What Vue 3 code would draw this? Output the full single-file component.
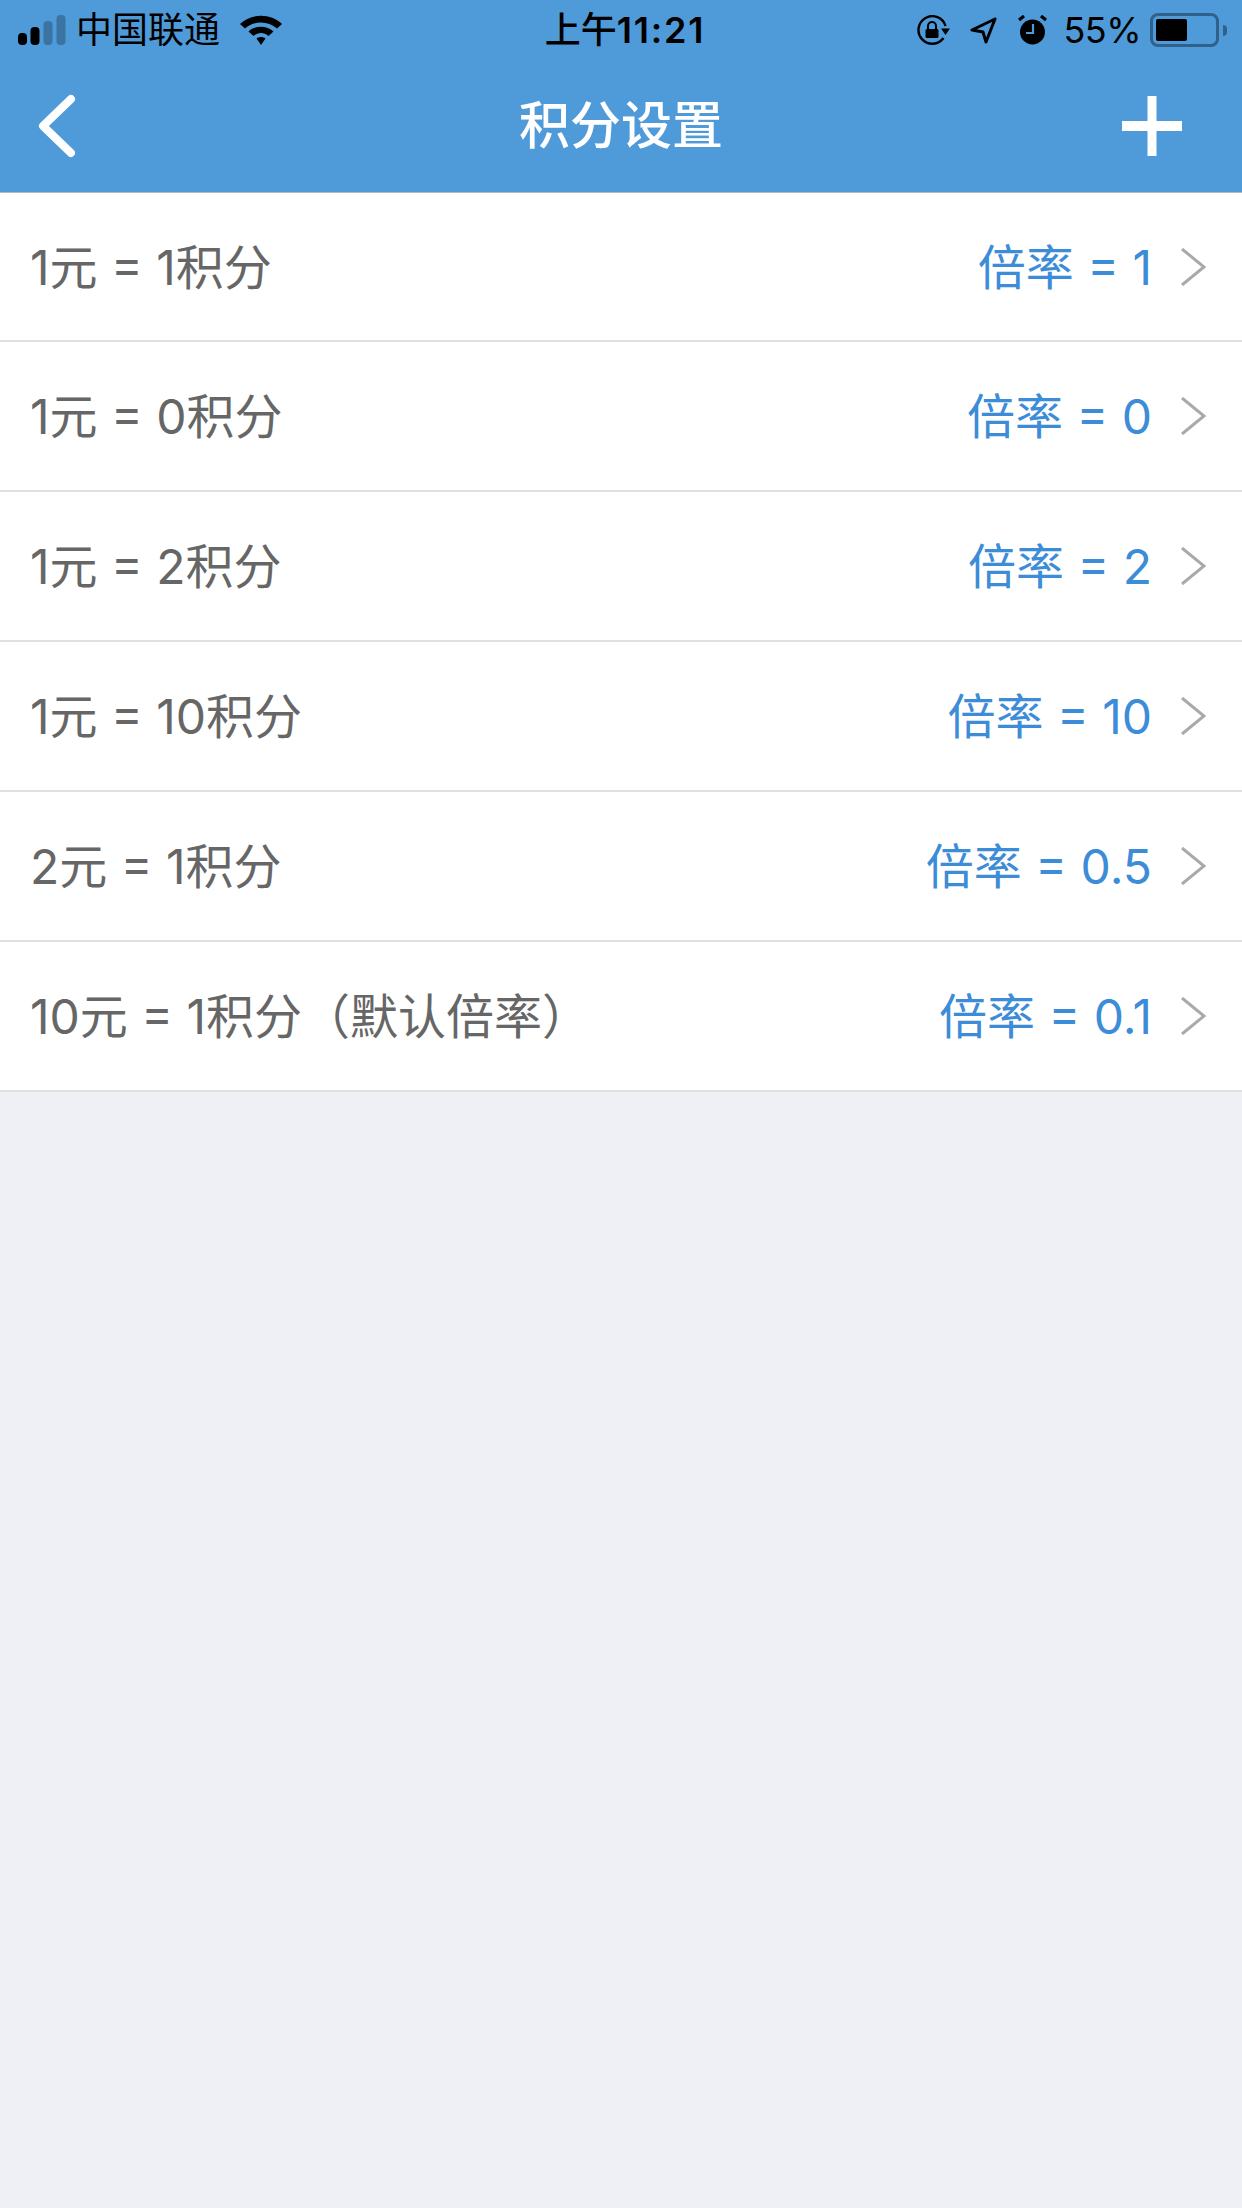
<script setup>
const rows = [
  { left: '1元 = 1积分', rate: '倍率 = 1' },
  { left: '1元 = 0积分', rate: '倍率 = 0' },
  { left: '1元 = 2积分', rate: '倍率 = 2' },
  { left: '1元 = 10积分', rate: '倍率 = 10' },
  { left: '2元 = 1积分', rate: '倍率 = 0.5' },
  { left: '10元 = 1积分（默认倍率）', rate: '倍率 = 0.1' },
]
</script>

<template>
  <div class="page">
    <header class="head">
      <div class="status">
        <div class="st-left">
          <svg class="signal" width="48" height="30" viewBox="0 0 48 30">
            <rect x="0" y="18" width="9" height="12" rx="4" fill="#000" />
            <rect x="12.5" y="12" width="9" height="18" rx="4" fill="#000" />
            <rect x="25.5" y="6" width="9" height="24" rx="4" fill="#000" fill-opacity=".25" />
            <rect x="38.5" y="0" width="9" height="30" rx="4" fill="#000" fill-opacity=".25" />
          </svg>
          <span class="carrier">中国联通</span>
          <svg class="wifi" width="44" height="30" viewBox="0 0 44 30">
            <path d="M1 9C12-2 32-2 43 9L38 13.500C29 5.500 15 5.500 6 13.500Z" fill="#000" />
            <path d="M9.500 16.500C16 10 28 10 34.500 16.500L29.500 21C25.500 17 18.500 17 14.500 21Z" fill="#000" />
            <path d="M17.500 23.500C20 21.500 24 21.500 26.500 23.500L22 30Z" fill="#000" />
          </svg>
        </div>
        <div class="time">上午<span class="digits">11:21</span></div>
        <div class="st-right">
          <svg width="34" height="30" viewBox="0 0 34 30">
            <path d="M26.500 23A13.800 13.800 0 1 1 28.500 11" fill="none" stroke="#000" stroke-width="2.400" />
            <path d="M24 13.500H33L28.500 20Z" fill="#000" />
            <rect x="8.500" y="14" width="13" height="9" rx="1.500" fill="#000" />
            <path d="M11 14V11A4 4 0 0 1 19 11V14" fill="none" stroke="#000" stroke-width="2" />
          </svg>
          <svg class="loc" width="27" height="27" viewBox="0 0 27 27">
            <path d="M25 2L2 13L13 15L16 25Z" fill="none" stroke="#000" stroke-width="3" stroke-linejoin="round" />
          </svg>
          <svg class="alarm" width="29" height="30" viewBox="0 0 29 30">
            <circle cx="14.500" cy="17" r="12.500" fill="#000" />
            <path d="M15 9V18H8" fill="none" stroke="#4f9ad8" stroke-width="2.200" />
            <path d="M1 5L6 1M28 5L23 1" stroke="#000" stroke-width="3.200" />
          </svg>
          <span class="pct">55%</span>
          <div class="battery">
            <div class="cell"><div class="charge"></div></div>
            <div class="nub"></div>
          </div>
        </div>
      </div>
      <div class="nav">
        <svg class="back" width="44" height="70" viewBox="0 0 44 70">
          <path d="M35 8L7 35L35 62" fill="none" stroke="#fff" stroke-width="8" stroke-linecap="round" stroke-linejoin="round" />
        </svg>
        <h1 class="title">积分设置</h1>
        <svg class="plus" width="60" height="60" viewBox="0 0 60 60">
          <rect x="25.500" y="0" width="9" height="60" fill="#fff" />
          <rect x="0" y="25" width="60" height="10" fill="#fff" />
        </svg>
      </div>
    </header>
    <ul class="list">
      <li v-for="r in rows" :key="r.left" class="row">
        <span class="left">{{ r.left }}</span>
        <span class="rate">{{ r.rate }}</span>
        <svg class="chev" width="26" height="38" viewBox="0 0 26 38">
          <path d="M2 1L24 19L2 37" fill="none" stroke="#a9a9a9" stroke-width="3" />
        </svg>
      </li>
    </ul>
  </div>
</template>

<style>
html, body { margin: 0; padding: 0; }
</style>

<style scoped>
.page {
  width: 1242px;
  height: 2208px;
  background: #eff0f5;
  font-family: "Inter", "Noto Sans CJK SC", sans-serif;
  overflow: hidden;
}
.head {
  background: #4f9ad8;
  height: 193px;
  border-bottom: 1px solid #b9b9b9;
  box-sizing: border-box;
}
.status {
  height: 60px;
  padding: 0 15px 0 18px;
  box-sizing: border-box;
  display: grid;
  grid-template-columns: 1fr auto 1fr;
  align-items: center;
  color: #000;
  font-size: 36px;
  line-height: 44px;
}
.st-left, .st-right { display: flex; align-items: center; }
.st-right { justify-content: flex-end; }
.carrier { margin-left: 10px; }
.wifi { margin-left: 19px; }
.time { font-weight: 500; padding-left: 5px; }
.digits { font-weight: 600; letter-spacing: 1.8px; }
.loc { margin-left: 19px; }
.alarm { margin-left: 21px; }
.pct { margin-left: 16px; font-weight: 400; letter-spacing: -0.5px; }
.battery { display: flex; align-items: center; margin-left: 9px; }
.cell {
  width: 69px;
  height: 34px;
  box-sizing: border-box;
  border: 3px solid #2f618c;
  border-radius: 8px;
  padding: 3px;
}
.charge { width: 31px; height: 100%; background: #000; border-radius: 2px; }
.nub { width: 4px; height: 11px; margin-left: 4px; background: #2f618c; border-radius: 0 4px 4px 0; }
.nav {
  height: 132px;
  display: grid;
  grid-template-columns: 1fr auto 1fr;
  align-items: center;
  padding: 0 60px 0 36px;
}
.plus { justify-self: end; }
.title {
  margin: 0 0 0 24px;
  color: #fff;
  font-size: 51px;
  font-weight: 500;
  line-height: 60px;
}
.list { margin: 0; padding: 0; list-style: none; }
.row {
  height: 150px;
  box-sizing: border-box;
  background: #fff;
  border-bottom: 2px solid #e0e0e0;
  display: flex;
  align-items: center;
  padding: 0 36px 0 30px;
  font-size: 48px;
}
.row:first-child { height: 149px; }
.left { color: #666; flex: 1; padding-bottom: 6px; }
.rate { color: #3c8cd8; padding-bottom: 6px; }
.chev { margin-left: 28px; }
</style>
